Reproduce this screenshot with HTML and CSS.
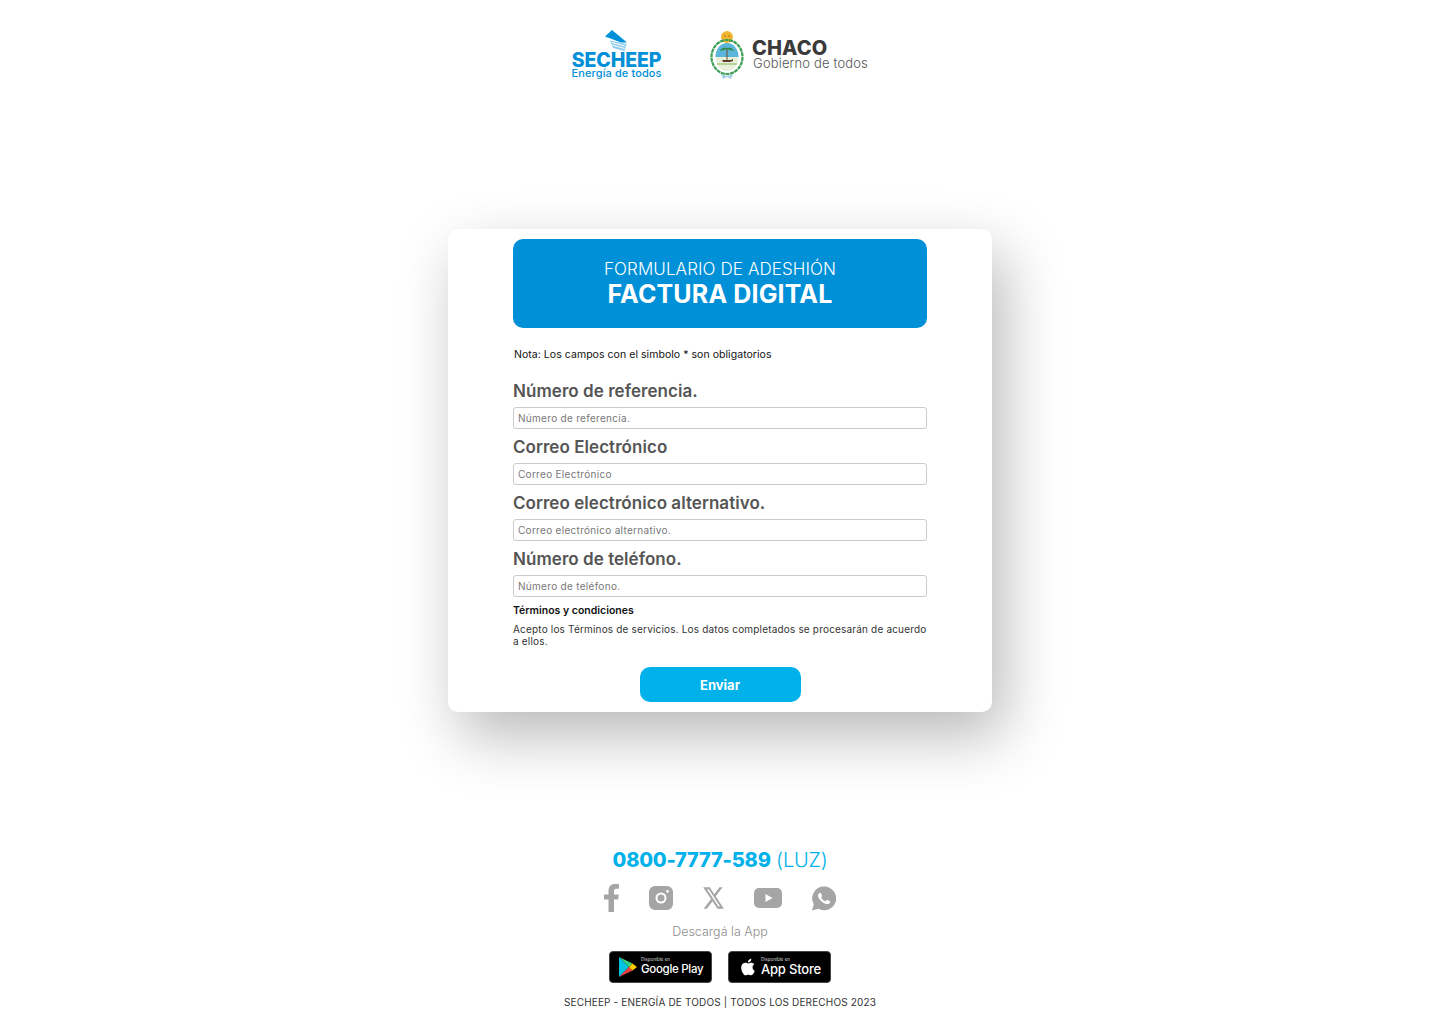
FILE: index.html
```html
<!DOCTYPE html>
<html lang="es">
<head>
<meta charset="utf-8">
<title>Factura Digital</title>
<link rel="stylesheet" href="styles.css">
</head>
<body>
<header class="top">
  <div class="secheep">
    <svg class="secheep-mark" viewBox="0 0 24 22" width="24" height="22">
      <path d="M1 6.500 8 0 23 12.500 17 12.500Z" fill="#0090d7"/>
      <path d="M6 10.500 22.500 14 20.500 21 9 18Z" fill="#8fcdec"/>
      <path d="M8 12.500 21 16M8.500 15 20.500 18.500" stroke="#fff" stroke-width="1" fill="none"/>
    </svg>
    <div class="secheep-name">SECHEEP</div>
    <div class="secheep-tag">Energía de todos</div>
  </div>
  <div class="chaco">
    <svg class="shield" viewBox="0 0 36 50" width="36" height="50">
      <circle cx="18" cy="7" r="6" fill="#f2b632"/>
      <circle cx="16" cy="6" r=".8" fill="#a06a10"/><circle cx="20" cy="6" r=".8" fill="#a06a10"/>
      <ellipse cx="18" cy="27" rx="15.500" ry="17" fill="none" stroke="#3e9f55" stroke-width="2.200" stroke-dasharray="4 .6"/>
      <ellipse cx="18" cy="27" rx="11.500" ry="14" fill="#e8f0da"/>
      <path d="M6.500 27a11.500 14 0 0 1 23 0Z" fill="#5cb6dc"/>
      <path d="M8 33h20v2H8z" fill="#b7d39c"/>
      <path d="M17.500 30V19h1v11z" fill="#6b4a2a"/>
      <path d="M18 18c-4-1-6 1-7 3 3-1 5-1 7-2 2 1 4 1 7 2-1-2-3-4-7-3z" fill="#2f8a45"/>
      <path d="M13 30h9l2-1v2l-3 1h-7z" fill="#5a3d26"/>
      <path d="M12 44l6 2 6-2-2 5-4-2-4 2z" fill="#a9cfe8"/>
    </svg>
    <div class="chaco-text">
      <div class="chaco-name">CHACO</div>
      <div class="chaco-tag">Gobierno de todos</div>
    </div>
  </div>
</header>

<main class="card">
  <div class="banner">
    <div class="banner-sub">FORMULARIO DE ADESHIÓN</div>
    <h1 class="banner-title">FACTURA DIGITAL</h1>
  </div>
  <p class="note">Nota: Los campos con el simbolo * son obligatorios</p>
  <form class="form">
    <label class="label" for="ref">Número de referencia.</label>
    <input class="input" id="ref" placeholder="Número de referencia.">
    <label class="label" for="mail">Correo Electrónico</label>
    <input class="input" id="mail" placeholder="Correo Electrónico">
    <label class="label" for="alt">Correo electrónico alternativo.</label>
    <input class="input" id="alt" placeholder="Correo electrónico alternativo.">
    <label class="label" for="tel">Número de teléfono.</label>
    <input class="input" id="tel" placeholder="Número de teléfono.">
    <div class="terms-title">Términos y condiciones</div>
    <p class="terms">Acepto los Términos de servicios. Los datos completados se procesarán de acuerdo a ellos.</p>
    <button class="send" type="button">Enviar</button>
  </form>
</main>

<footer class="foot">
  <div class="phone"><b>0800-7777-589</b> (LUZ)</div>
  <div class="social">
    <svg class="s-f" viewBox="0 0 15 28" width="15" height="28"><path d="M4.500 28V15.500H0v-5h4.500V7C4.500 2.500 7 0 11 0c1.700 0 3.200.1 4 .2v4.500h-2.600C10.300 4.700 10 5.800 10 7.200v3.300h4.800l-.7 5H10V28Z" fill="#a5a5a5"/></svg>
    <svg viewBox="0 0 24 24" width="24" height="24"><path fill-rule="evenodd" d="M6 0h12a6 6 0 0 1 6 6v12a6 6 0 0 1-6 6H6a6 6 0 0 1-6-6V6a6 6 0 0 1 6-6Zm6 6.500a5.500 5.500 0 1 0 0 11 5.500 5.500 0 0 0 0-11Zm0 2a3.500 3.500 0 1 1 0 7 3.500 3.500 0 0 1 0-7ZM18.500 4a1.400 1.400 0 1 0 0 2.800 1.400 1.400 0 0 0 0-2.800Z" fill="#a5a5a5"/></svg>
    <svg viewBox="1 2 22 20" width="21" height="22" preserveAspectRatio="none"><path d="M18.244 2.250h3.308l-7.227 8.260 8.502 11.240H16.170l-5.214-6.817L4.990 21.750H1.680l7.730-8.835L1.254 2.250H8.080l4.713 6.231zm-1.161 17.520h1.833L7.084 4.126H5.117z" fill="#a5a5a5"/></svg>
    <svg viewBox="0 0 28 20" width="28" height="20"><path fill-rule="evenodd" d="M5 0h18a5 5 0 0 1 5 5v10a5 5 0 0 1-5 5H5a5 5 0 0 1-5-5V5a5 5 0 0 1 5-5Zm6.500 6v8l7-4Z" fill="#a5a5a5"/></svg>
    <svg viewBox="0 0 24 24" width="24" height="25"><path d="M12.050 0A11.800 11.800 0 0 0 1.800 17.700L0 24l6.500-1.700A11.900 11.900 0 1 0 12.050 0Z" fill="#a5a5a5"/><path d="M17.472 14.382c-.297-.149-1.758-.867-2.030-.967-.273-.099-.471-.148-.670.150-.197.297-.767.966-.940 1.164-.173.199-.347.223-.644.075-.297-.150-1.255-.463-2.390-1.475-.883-.788-1.480-1.761-1.653-2.059-.173-.297-.018-.458.130-.606.134-.133.298-.347.446-.520.149-.174.198-.298.298-.497.099-.198.050-.371-.025-.520-.075-.149-.669-1.612-.916-2.207-.242-.579-.487-.500-.669-.510-.173-.008-.371-.010-.570-.010-.198 0-.520.074-.792.372-.272.297-1.040 1.016-1.040 2.479 0 1.462 1.065 2.875 1.213 3.074.149.198 2.096 3.200 5.077 4.487.709.306 1.262.489 1.694.625.712.227 1.360.195 1.871.118.571-.085 1.758-.719 2.006-1.413.248-.694.248-1.289.173-1.413-.074-.124-.272-.198-.570-.347z" fill="#fff"/></svg>
  </div>
  <div class="app-title">Descargá la App</div>
  <div class="badges">
    <div class="badge">
      <svg class="play" viewBox="0 0 20 22" width="18" height="20">
        <path d="M0 0v22l11-11Z" fill="#00c3e3"/>
        <path d="M0 0l11 11 4-4Z" fill="#35d07f"/>
        <path d="M0 22l11-11 4 4Z" fill="#ef4145"/>
        <path d="M15 7l5 4-5 4-4-4Z" fill="#ffc800"/>
      </svg>
      <div class="badge-text"><span class="badge-small">Disponible en</span><span class="badge-big gp">Google Play</span></div>
    </div>
    <div class="badge">
      <svg class="apple" viewBox="0 0 24 24" width="20" height="22"><path d="M18.710 19.500c-.830 1.240-1.710 2.450-3.050 2.470-1.340.030-1.770-.790-3.290-.790-1.530 0-2 .770-3.270.820-1.310.050-2.300-1.320-3.140-2.530C4.250 17 2.940 12.450 4.700 9.390c.870-1.520 2.430-2.480 4.120-2.510 1.280-.020 2.500.870 3.290.870.780 0 2.260-1.070 3.800-.910.650.030 2.470.260 3.640 1.980-.090.060-2.170 1.280-2.150 3.810.030 3.020 2.650 4.030 2.680 4.040-.030.070-.420 1.440-1.380 2.830M13 3.500c.730-.830 1.940-1.460 2.940-1.500.130 1.170-.340 2.350-1.040 3.190-.690.850-1.830 1.510-2.950 1.420-.150-1.150.410-2.350 1.050-3.110z" fill="#fff"/></svg>
      <div class="badge-text"><span class="badge-small">Disponible en</span><span class="badge-big">App Store</span></div>
    </div>
  </div>
  <div class="copy">SECHEEP - ENERGÍA DE TODOS | TODOS LOS DERECHOS 2023</div>
</footer>
</body>
</html>
```
FILE: styles.css
```css
* { box-sizing: border-box; }
html, body { margin: 0; background: #fff; }
body {
  font-family: Inter, "Open Sans", "Liberation Sans", sans-serif;
  height: 1024px;
  overflow: hidden;
  display: flex;
  flex-direction: column;
  align-items: center;
  color: #000;
}

/* Header */
.top {
  display: flex;
  justify-content: center;
  align-items: center;
  gap: 48px;
  height: 108px;
  padding-top: 1px;
  width: 100%;
}
.secheep {
  width: 89px;
  display: flex;
  flex-direction: column;
  align-items: center;
  color: #0090d7;
}
.secheep-mark { margin: 0 0 -1px -2px; }
.secheep-name {
  font-size: 19.500px; line-height: 18px; font-weight: 800;
  letter-spacing: -.1px; color: #0090d7;
}
.secheep-tag { margin-top: -2px; font-size: 11px; line-height: 12px; font-weight: 500; letter-spacing: .1px; white-space: nowrap; }
.chaco { display: flex; align-items: center; gap: 7px; }
.chaco-text { display: flex; flex-direction: column; margin-top: 1px; }
.chaco-name { font-size: 20px; line-height: 16px; font-weight: 800; color: #3a3a3a; letter-spacing: .1px; }
.chaco-tag { font-size: 13px; line-height: 14px; font-weight: 300; color: #555; margin-left: 1px; letter-spacing: .15px; white-space: nowrap; }

/* Card */
.card {
  width: 544px;
  height: 483px;
  margin-top: 121px;
  padding: 10px 65px;
  background: #fff;
  border-radius: 10px;
  box-shadow: 12px 24px 60px rgba(0, 0, 0, .28);
}
.banner {
  height: 89px;
  padding-top: 21px;
  background: #0090d7;
  border-radius: 10px;
  color: #fff;
  text-align: center;
}
.banner-sub { font-size: 17px; line-height: 19px; font-weight: 300; letter-spacing: .1px; }
.banner-title { margin: 0; padding-top: 1px; font-size: 25px; line-height: 29px; font-weight: 700; letter-spacing: .15px; }
.note { margin: 19px 0 10px 1px; font-size: 10.500px; line-height: 16px; letter-spacing: .05px; color: #111; }
.form { display: flex; flex-direction: column; }
.label {
  height: 34px;
  padding-top: 1px;
  display: flex; align-items: center;
  font-size: 17px; font-weight: 600; color: #555;
  letter-spacing: .05px;
}
.input {
  height: 22px;
  padding: 0 4px;
  border: 1px solid #ccc;
  border-radius: 3px;
  font: 400 10px Inter, "Open Sans", sans-serif;
  letter-spacing: .3px;
  background: #fff;
}
.input::placeholder { color: #777; opacity: 1; }
.terms-title { margin-top: 7px; font-size: 10.500px; line-height: 14px; font-weight: 600; color: #111; }
.terms { margin: 5px 0 0; font-size: 10px; line-height: 12px; color: #333; letter-spacing: .18px; }
.send {
  width: 161px; height: 35px;
  margin: 20px auto 0;
  border: 0; border-radius: 10px;
  background: #00b1ea;
  color: #fff;
  font: 700 13px Inter, "Open Sans", sans-serif;
}

/* Footer */
.foot {
  margin-top: 134px;
  display: flex; flex-direction: column; align-items: center;
}
.phone { font-size: 20px; line-height: 28px; color: #00b1ea; font-weight: 300; letter-spacing: -.2px; }
.phone b { font-weight: 800; }
.social { display: flex; align-items: center; gap: 30px; margin-top: 10px; height: 28px; }
.app-title { margin-top: 11px; font-size: 12.500px; line-height: 18px; font-weight: 300; color: #8e8e8e; }
.badges { display: flex; gap: 16px; margin-top: 10px; }
.badge {
  width: 103px; height: 32px;
  display: flex; align-items: center; gap: 4px;
  padding-left: 9px;
  background: #000;
  border: 1px solid #444;
  border-radius: 4px;
  color: #fff;
}
.apple { margin-right: -1px; }
.badge-text { display: flex; flex-direction: column; margin-top: -1px; }
.badge-small { font-size: 4.500px; line-height: 6px; color: #ddd; white-space: nowrap; }
.badge-big { font-size: 13px; line-height: 13px; font-weight: 500; white-space: nowrap; letter-spacing: -.2px; }
.gp { font-size: 11.500px; letter-spacing: -.3px; }
.copy { margin-top: 10px; font-size: 10px; line-height: 18px; color: #333; letter-spacing: .16px; white-space: nowrap; }
```
